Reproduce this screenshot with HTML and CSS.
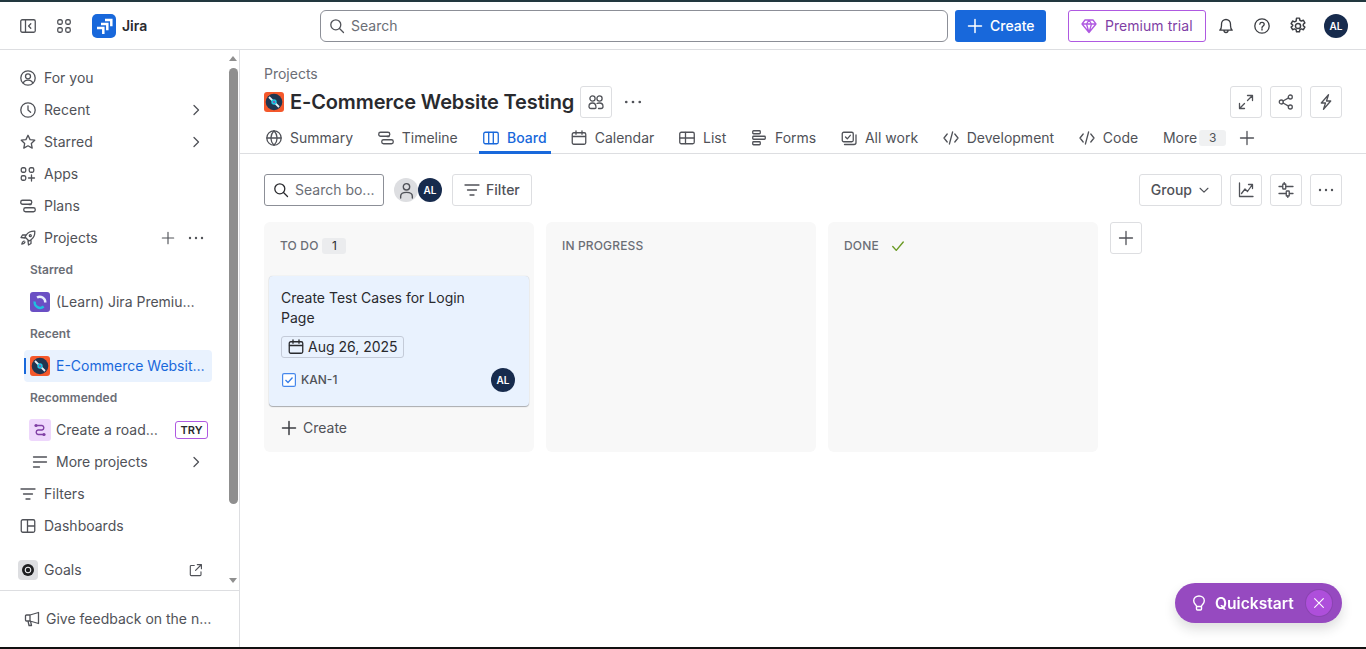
FILE: index.html
```html
<!DOCTYPE html>
<html>
<head>
	<meta charset="utf-8">
	<title>E-Commerce Website Testing - Board - Jira</title>
	<link rel="stylesheet" href="styles.css">
</head>
<body>
	<svg class="sprite" xmlns="http://www.w3.org/2000/svg">
		<defs>
			<symbol id="i-panel" viewBox="0 0 16 16"><rect x=".75" y="1.75" width="14.5" height="12.5" rx="1.5"/><path d="M5.5 2v12M10.8 5.8 8.6 8l2.2 2.2"/></symbol>
			<symbol id="i-grid" viewBox="0 0 16 16"><rect x="1.75" y="1.75" width="4.5" height="4.5" rx="1.5"/><rect x="9.75" y="1.75" width="4.5" height="4.5" rx="1.5"/><rect x="1.75" y="9.75" width="4.5" height="4.5" rx="1.5"/><rect x="9.75" y="9.75" width="4.5" height="4.5" rx="1.5"/></symbol>
			<symbol id="i-search" viewBox="0 0 16 16"><circle cx="6.8" cy="6.8" r="5"/><path d="m10.5 10.5 4 4"/></symbol>
			<symbol id="i-plus" viewBox="0 0 16 16"><path d="M8 1.5v13M1.5 8h13"/></symbol>
			<symbol id="i-gem" viewBox="0 0 16 16"><path d="M4 2h8l3 4-7 8.5L1 6zM1 6h14M5.5 6 8 14.5 10.500 6 8 2 5.500 6"/></symbol>
			<symbol id="i-bell" viewBox="0 0 16 16"><path d="M1.800 12.200c1.300-1.200 1.700-2.500 1.700-4.700V6a4.500 4.500 0 0 1 9 0v1.500c0 2.200.4 3.500 1.700 4.700zM6 12.500a2 2 0 0 0 4 0"/></symbol>
			<symbol id="i-help" viewBox="0 0 16 16"><circle cx="8" cy="8" r="7.200"/><path d="M5.800 6.200C5.900 5 6.800 4.300 8 4.300c1.300 0 2.200.8 2.200 1.900 0 1.700-2.200 1.700-2.200 3.500M8 11v1"/></symbol>
			<symbol id="i-gear" viewBox="0 0 16 16"><circle cx="8" cy="8" r="2.300"/><path d="M6.700 1h2.600l.4 1.900 1.300.7 1.800-.7 1.300 2.300-1.400 1.200v1.400l1.400 1.200-1.300 2.300-1.800-.7-1.300.7-.4 1.900H6.700l-.4-1.900-1.300-.7-1.800.7-1.300-2.300 1.400-1.200V7.100L1.900 5.900l1.300-2.300 1.800.7 1.300-.7z"/></symbol>
			<symbol id="i-person" viewBox="0 0 16 16"><circle cx="8" cy="8" r="7.200"/><circle cx="8" cy="6.300" r="2.500"/><path d="M3.300 13.200c.5-2.200 2.200-3.100 4.700-3.100s4.200.9 4.700 3.100"/></symbol>
			<symbol id="i-ghost" viewBox="0 0 16 16"><circle cx="8" cy="4.500" r="3"/><path d="M2.500 15v-1.500c0-2.500 2-3.700 5.500-3.700s5.500 1.200 5.500 3.700V15"/></symbol>
			<symbol id="i-clock" viewBox="0 0 16 16"><circle cx="8" cy="8" r="7.200"/><path d="M8 3.800V8l2.600 2.300"/></symbol>
			<symbol id="i-star" viewBox="0 0 16 16"><path d="m8 1.300 2.050 4.300 4.700.6-3.450 3.250.9 4.650L8 11.800l-4.200 2.300.9-4.650L1.250 6.200l4.700-.6z"/></symbol>
			<symbol id="i-chev" viewBox="0 0 16 16"><path d="m6 3.500 4.500 4.500L6 12.500"/></symbol>
			<symbol id="i-apps" viewBox="0 0 16 16"><rect x="1.250" y="1.750" width="4.500" height="4.500" rx="1.500"/><rect x="9.250" y="1.750" width="4.500" height="4.500" rx="1.500"/><rect x="1.250" y="9.750" width="4.500" height="4.500" rx="1.500"/><path d="M11.500 9v6M8.500 12h6"/></symbol>
			<symbol id="i-plans" viewBox="0 0 16 16"><rect x=".75" y="2.250" width="11" height="4" rx="1.800"/><rect x="3.750" y="9.750" width="11.500" height="4" rx="1.800"/><path d="M9 6.500h2"/></symbol>
			<symbol id="i-rocket" viewBox="0 0 16 16"><path d="M14.800 1.200c-3.800-.2-6.400.9-8.300 3.500L5 7l4 4 2.300-1.500c2.600-1.900 3.700-4.500 3.500-8.300zM6 5H2.500L1 7.500l4 .5M11 10v3.500L8.500 15 8 11M4 11c-1.300.4-2 1.500-2.200 3.200C3.500 14 4.600 13.300 5 12"/><circle cx="10.300" cy="5.700" r="1"/></symbol>
			<symbol id="i-dots" viewBox="0 0 16 16"><circle class="f" cx="2" cy="8" r="1.200"/><circle class="f" cx="8" cy="8" r="1.200"/><circle class="f" cx="14" cy="8" r="1.200"/></symbol>
			<symbol id="i-filter" viewBox="0 0 16 16"><path d="M1 3h14M3.500 8h9M6 13h4"/></symbol>
			<symbol id="i-lines" viewBox="0 0 16 16"><path d="M1.500 3h13M1.500 8h13M1.500 13h6"/></symbol>
			<symbol id="i-dash" viewBox="0 0 16 16"><rect x="1.250" y="1.750" width="13.500" height="12.500" rx="1.500"/><path d="M7.500 2v12M7.500 8h7"/></symbol>
			<symbol id="i-ext" viewBox="0 0 16 16"><path d="M6 2.800H2.500a1 1 0 0 0-1 1v9.700a1 1 0 0 0 1 1h10.200a1 1 0 0 0 1-1V10M9.500 1.800h4.700v4.700M14 2 7.500 8.500"/></symbol>
			<symbol id="i-horn" viewBox="0 0 16 16"><path d="M14.500 1.500v11L6 10H2.500a1 1 0 0 1-1-1V5a1 1 0 0 1 1-1H6zM6 4v6M4 10l1 4.500h2.500L6.500 10"/></symbol>
			<symbol id="i-people" viewBox="0 0 16 16"><circle cx="4.500" cy="4.500" r="2.600"/><circle cx="11.500" cy="4.500" r="2.600"/><path d="M1 12.500C1 10.500 2.500 9 4.500 9 7 9 8 11 8 13.500c0 .6-.400 1-1 1H3c-1.200 0-2-.8-2-2zM9 9.500c.7-.4 1.500-.5 2.500-.5 2.200 0 3.500 1.500 3.500 3.500 0 1.200-.8 2-2 2h-2.500"/></symbol>
			<symbol id="i-globe" viewBox="0 0 16 16"><circle cx="8" cy="8" r="7.200"/><path d="M1 8h14M8 .8c-4.200 4.400-4.200 10 0 14.400M8 .8c4.200 4.400 4.200 10 0 14.400"/></symbol>
			<symbol id="i-board" viewBox="0 0 16 16"><rect x=".75" y="2.250" width="14.500" height="11.500" rx="1.500"/><path d="M5.700 2.500v11M10.300 2.500v11"/></symbol>
			<symbol id="i-cal" viewBox="0 0 16 16"><rect x="1.250" y="2.750" width="13.500" height="11.500" rx="1.500"/><path d="M1.500 6.500h13M5 .8v3.500M11 .8v3.500"/></symbol>
			<symbol id="i-list" viewBox="0 0 16 16"><rect x=".75" y="2.250" width="14.500" height="11.500" rx="1.500"/><path d="M1 8h14M6.500 2.500v11"/></symbol>
			<symbol id="i-forms" viewBox="0 0 16 16"><rect x="1.750" y=".75" width="7.500" height="3" rx=".8"/><rect x="1.750" y="6.250" width="12.500" height="3" rx=".8"/><rect x="1.750" y="11.750" width="7.500" height="3" rx=".8"/></symbol>
			<symbol id="i-work" viewBox="0 0 16 16"><rect x="1.250" y="2.250" width="11" height="9.500" rx="1.500"/><path d="m4.500 7 1.800 1.800L9.300 5.300M15 5v7.500a2 2 0 0 1-2 2H3.500"/></symbol>
			<symbol id="i-code" viewBox="0 0 16 16"><path d="M4.200 4 1 8l3.200 4M11.800 4 15 8l-3.200 4M9.600 2 6.400 14"/></symbol>
			<symbol id="i-expand" viewBox="0 0 16 16"><path d="M9.500 1.500h5v5M14.200 1.800 9.500 6.500M6.500 14.500h-5v-5M1.800 14.200 6.500 9.500"/></symbol>
			<symbol id="i-share" viewBox="0 0 16 16"><circle cx="12.300" cy="3" r="2"/><circle cx="3.300" cy="8" r="2"/><circle cx="12.300" cy="13" r="2"/><path d="m5 7 5.600-3.100M5 9l5.600 3.100"/></symbol>
			<symbol id="i-bolt" viewBox="0 0 16 16"><path d="M10.500.8 3.300 9h4.200M5.500 15.200 12.700 7H8.500M10.500.8 8.500 7M5.500 15.200 7.500 9"/></symbol>
			<symbol id="i-down" viewBox="0 0 16 16"><path d="m3.500 6 4.500 4.500L12.500 6"/></symbol>
			<symbol id="i-chart" viewBox="0 0 16 16"><path d="M1.500 1v13.500H15M3.500 11.500 7 7l2.500 2.500 4.500-6.500M10.500 2.500H14.500V6.500"/></symbol>
			<symbol id="i-sliders" viewBox="0 0 16 16"><path d="M1 4.500h3.500M8 4.500h7M1 11.500h7M11.500 11.500H15M6.200 .5V2M9.800 14v1.500"/><rect x="4.750" y="2" width="3" height="5" rx=".6"/><rect x="8.250" y="9" width="3" height="5" rx=".6"/></symbol>
			<symbol id="i-check" viewBox="0 0 16 16"><path d="m2 8.500 4 4.500L14 3.500"/></symbol>
			<symbol id="i-bulb" viewBox="0 0 16 16"><path d="M5.500 11C4.800 9.700 2.700 8.600 2.700 5.800 2.700 3 5 1 8 1s5.300 2 5.300 4.800c0 2.800-2.100 3.900-2.800 5.200v3a1 1 0 0 1-1 1h-3a1 1 0 0 1-1-1zM5.500 11.500h5"/></symbol>
			<symbol id="i-close" viewBox="0 0 16 16"><path d="m3 3 10 10M13 3 3 13"/></symbol>
			<symbol id="p-learn" viewBox="0 0 20 20"><rect width="20" height="20" rx="3" fill="#6a4fc4"/><path d="M7 5.500a5.500 5.500 0 0 1 8.300 5" fill="none" stroke="#e8eefc" stroke-width="2.400"/><path d="M4.700 9.500a5.500 5.500 0 0 0 9 5" fill="none" stroke="#1fbfe0" stroke-width="2.400"/></symbol>
			<symbol id="p-shop" viewBox="0 0 20 20"><rect width="20" height="20" rx="3" fill="#f4582b"/><circle cx="10" cy="10" r="8.300" fill="#1f3550"/><path d="m5 5 10 10" stroke="#e6eef5" stroke-width="1.800"/><circle cx="10" cy="10" r="2.700" fill="#1fc3e0"/><circle cx="10" cy="10" r=".9" fill="#b0308f"/></symbol>
		</defs>
	</svg>

	<div class="topline"></div>

	<header class="topbar">
		<div class="topLeft">
			<svg class="icon btnIcon"><use href="#i-panel"/></svg>
			<svg class="icon btnIcon"><use href="#i-grid"/></svg>
			<div class="logo">
				<svg class="logoMark" viewBox="0 0 24 24">
					<rect width="24" height="24" rx="5" fill="#1868db"/>
					<path d="M13 6h6.300v6.300M9 10h6.300v6.300M5 14h6.300v6" fill="none" stroke="#fff" stroke-width="2.500"/>
				</svg>
				<span class="logoText">Jira</span>
			</div>
		</div>
		<div class="globalSearch">
			<svg class="icon"><use href="#i-search"/></svg>
			<span>Search</span>
		</div>
		<button class="createBtn"><svg class="icon"><use href="#i-plus"/></svg>Create</button>
		<button class="trialBtn"><svg class="icon"><use href="#i-gem"/></svg>Premium trial</button>
		<div class="topRight">
			<svg class="icon"><use href="#i-bell"/></svg>
			<svg class="icon"><use href="#i-help"/></svg>
			<svg class="icon gear"><use href="#i-gear"/></svg>
			<span class="avatar">AL</span>
		</div>
	</header>

	<div class="content">
		<aside class="sidebar">
			<div class="sideTop">
				<nav class="nav">
					<div class="navRow"><svg class="icon"><use href="#i-person"/></svg><span>For you</span></div>
					<div class="navRow"><svg class="icon"><use href="#i-clock"/></svg><span>Recent</span><svg class="icon end"><use href="#i-chev"/></svg></div>
					<div class="navRow"><svg class="icon"><use href="#i-star"/></svg><span>Starred</span><svg class="icon end"><use href="#i-chev"/></svg></div>
					<div class="navRow"><svg class="icon"><use href="#i-apps"/></svg><span>Apps</span></div>
					<div class="navRow"><svg class="icon"><use href="#i-plans"/></svg><span>Plans</span></div>
					<div class="navRow"><svg class="icon"><use href="#i-rocket"/></svg><span>Projects</span><svg class="icon end small"><use href="#i-plus"/></svg><svg class="icon"><use href="#i-dots"/></svg></div>
					<div class="navLabel">Starred</div>
					<div class="navRow sub">
						<svg class="projIcon"><use href="#p-learn"/></svg>
						<span>(Learn) Jira Premiu…</span>
					</div>
					<div class="navLabel">Recent</div>
					<div class="navRow sub active">
						<svg class="projIcon"><use href="#p-shop"/></svg>
						<span>E-Commerce Websit…</span>
					</div>
					<div class="navLabel">Recommended</div>
					<div class="navRow sub">
						<svg class="projIcon wide" viewBox="0 0 22 22"><rect width="22" height="22" rx="3" fill="#eed7fc"/><path d="M7 6.500h6a2.300 2.300 0 0 1 0 4.500H9a2.300 2.300 0 0 0 0 4.500h6" fill="none" stroke="#803fa5" stroke-width="1.400"/><circle cx="7" cy="6.500" r="1.600" fill="#803fa5"/><circle cx="15" cy="15.500" r="1.600" fill="#803fa5"/></svg>
						<span>Create a road…</span>
						<em class="tryTag">TRY</em>
					</div>
					<div class="navRow sub"><svg class="icon wideBox"><use href="#i-lines"/></svg><span>More projects</span><svg class="icon end"><use href="#i-chev"/></svg></div>
					<div class="navRow"><svg class="icon"><use href="#i-filter"/></svg><span>Filters</span></div>
					<div class="navRow"><svg class="icon"><use href="#i-dash"/></svg><span>Dashboards</span></div>
					<div class="navRow goals">
						<span class="goalIcon"><i></i></span>
						<span>Goals</span>
						<svg class="icon end extLink"><use href="#i-ext"/></svg>
					</div>
				</nav>
				<div class="scrollbar">
					<div class="arrowUp"></div>
					<div class="thumb"></div>
					<div class="arrowDown"></div>
				</div>
			</div>
			<div class="sideFoot">
				<svg class="icon"><use href="#i-horn"/></svg>
				<span>Give feedback on the n…</span>
			</div>
		</aside>

		<main class="main">
			<div class="crumb">Projects</div>
			<div class="titleRow">
				<svg class="projIcon"><use href="#p-shop"/></svg>
				<h1>E-Commerce Website Testing</h1>
				<button class="sqBtn"><svg class="icon"><use href="#i-people"/></svg></button>
				<svg class="icon titleDots"><use href="#i-dots"/></svg>
				<div class="rightBtns">
					<button class="sqBtn"><svg class="icon"><use href="#i-expand"/></svg></button>
					<button class="sqBtn"><svg class="icon"><use href="#i-share"/></svg></button>
					<button class="sqBtn"><svg class="icon"><use href="#i-bolt"/></svg></button>
				</div>
			</div>

			<div class="tabs">
				<div class="tab"><svg class="icon"><use href="#i-globe"/></svg>Summary</div>
				<div class="tab"><svg class="icon"><use href="#i-plans"/></svg>Timeline</div>
				<div class="tab current"><svg class="icon"><use href="#i-board"/></svg>Board</div>
				<div class="tab"><svg class="icon"><use href="#i-cal"/></svg>Calendar</div>
				<div class="tab"><svg class="icon"><use href="#i-list"/></svg>List</div>
				<div class="tab"><svg class="icon"><use href="#i-forms"/></svg>Forms</div>
				<div class="tab"><svg class="icon"><use href="#i-work"/></svg>All work</div>
				<div class="tab"><svg class="icon"><use href="#i-code"/></svg>Development</div>
				<div class="tab"><svg class="icon"><use href="#i-code"/></svg>Code</div>
				<div class="tab more">More<span class="moreCount">3</span></div>
				<svg class="icon tabPlus"><use href="#i-plus"/></svg>
			</div>

			<div class="toolbar">
				<div class="boardSearch"><svg class="icon"><use href="#i-search"/></svg><span>Search bo...</span></div>
				<div class="people">
					<span class="avatar ghost"><svg class="icon"><use href="#i-ghost"/></svg></span>
					<span class="avatar">AL</span>
				</div>
				<button class="textBtn"><svg class="icon"><use href="#i-filter"/></svg>Filter</button>
				<div class="rightBtns">
					<button class="textBtn group">Group<svg class="icon tiny"><use href="#i-down"/></svg></button>
					<button class="sqBtn"><svg class="icon"><use href="#i-chart"/></svg></button>
					<button class="sqBtn"><svg class="icon"><use href="#i-sliders"/></svg></button>
					<button class="sqBtn"><svg class="icon"><use href="#i-dots"/></svg></button>
				</div>
			</div>

			<div class="board">
				<section class="col">
					<div class="colHead">TO DO<span class="count">1</span></div>
					<article class="card">
						<div class="cardTitle">Create Test Cases for Login Page</div>
						<div class="datePill"><svg class="icon"><use href="#i-cal"/></svg>Aug 26, 2025</div>
						<div class="cardFoot">
							<svg class="taskIcon" viewBox="0 0 14 14"><rect x=".6" y=".6" width="12.800" height="12.800" rx="1.500" fill="#fff" stroke="#4688ec" stroke-width="1.200"/><path d="m3.500 7 2.500 2.500 4.500-5" fill="none" stroke="#357de8" stroke-width="1.300"/></svg>
							<span class="key">KAN-1</span>
							<span class="avatar">AL</span>
						</div>
					</article>
					<div class="colCreate"><svg class="icon"><use href="#i-plus"/></svg>Create</div>
				</section>
				<section class="col">
					<div class="colHead">IN PROGRESS</div>
				</section>
				<section class="col">
					<div class="colHead">DONE<svg class="icon doneTick"><use href="#i-check"/></svg></div>
				</section>
				<button class="sqBtn"><svg class="icon"><use href="#i-plus"/></svg></button>
			</div>
		</main>
	</div>

	<div class="bottomline"></div>

	<div class="quickstart">
		<svg class="icon"><use href="#i-bulb"/></svg>
		<span>Quickstart</span>
		<span class="qsClose"><svg class="icon"><use href="#i-close"/></svg></span>
	</div>
</body>
</html>
```

FILE: styles.css
```css
* {
	box-sizing: border-box;
}
html, body {
	height: 100%;
}
body {
	margin: 0;
	display: flex;
	flex-direction: column;
	overflow: hidden;
	background-color: white;
	color: #505258;
	font-family: Inter, "Noto Sans", sans-serif;
	font-size: 14px;
	line-height: 20px;
}
button {
	font-family: inherit;
	font-size: 14px;
	line-height: 20px;
	cursor: pointer;
}
.sprite {
	display: none;
}
.icon {
	flex: none;
	width: 16px;
	height: 16px;
	fill: none;
	stroke: #505258;
	stroke-width: 1.300;
	stroke-linecap: round;
	stroke-linejoin: round;
}
.f {
	fill: #505258;
	stroke: none;
}

.topline {
	flex: none;
	height: 2px;
	background-color: #22383f;
}
.bottomline {
	flex: none;
	height: 2px;
	background-color: #111;
}

/* top bar */
.topbar {
	flex: none;
	display: flex;
	align-items: center;
	height: 48px;
	padding-right: 18px;
	border-bottom: 1px solid #dddee1;
}
.topLeft {
	display: flex;
	align-items: center;
	width: 320px;
	padding-left: 20px;
}
.btnIcon {
	margin-right: 20px;
}
.logo {
	display: flex;
	align-items: center;
	gap: 6px;
}
.logoMark {
	width: 24px;
	height: 24px;
}
.logoText {
	font-size: 14px;
	font-weight: 600;
	color: #292a2e;
}
.globalSearch {
	display: flex;
	align-items: center;
	gap: 6px;
	width: 628px;
	height: 32px;
	padding-left: 8px;
	border: 1px solid #8c8f97;
	border-radius: 6px;
	color: #6b6e76;
}
.createBtn {
	display: flex;
	align-items: center;
	gap: 7px;
	height: 32px;
	width: 91px;
	margin-left: 7px;
	padding: 0 0 0 12px;
	border: 0;
	border-radius: 3px;
	background-color: #1868db;
	color: white;
	font-weight: 500;
}
.createBtn .icon {
	stroke: white;
	stroke-width: 1.500;
}
.trialBtn {
	display: flex;
	align-items: center;
	gap: 8px;
	height: 32px;
	width: 138px;
	margin-left: 22px;
	padding: 0 0 0 12px;
	border: 1px solid #af59e1;
	border-radius: 3px;
	background-color: white;
	color: #803fa5;
	font-weight: 400;
	letter-spacing: .05px;
}
.trialBtn .icon {
	stroke: #af59e1;
}
.topRight {
	display: flex;
	align-items: center;
	gap: 20px;
	margin-left: 12px;
}
.topRight .icon {
	stroke: #3b3d42;
}
.topRight .gear {
	width: 18px;
	height: 18px;
	margin: 0 -1px;
}
.topRight .avatar {
	margin-left: -2px;
}
.avatar {
	flex: none;
	display: flex;
	align-items: center;
	justify-content: center;
	width: 24px;
	height: 24px;
	border-radius: 50%;
	background-color: #172b4d;
	color: white;
	font-size: 10px;
	font-weight: 600;
}

.content {
	flex: 1;
	display: flex;
	min-height: 0;
}

/* sidebar */
.sidebar {
	flex: none;
	display: flex;
	flex-direction: column;
	width: 240px;
	border-right: 1px solid #dddee1;
}
.sideTop {
	display: flex;
	height: 541px;
	border-bottom: 1px solid #dddee1;
}
.nav {
	width: 224px;
	padding: 12px 12px 0;
}
.navRow {
	display: flex;
	align-items: center;
	gap: 8px;
	height: 32px;
	padding-left: 8px;
	padding-right: 8px;
	border-radius: 4px;
	white-space: nowrap;
}
.navRow .end {
	margin-left: auto;
}
.navRow .small {
	margin-right: 5px;
	width: 14px;
	height: 14px;
}
.navLabel {
	height: 32px;
	padding-left: 18px;
	font-size: 12px;
	font-weight: 600;
	line-height: 32px;
	color: #6b6e76;
}
.sub {
	margin-left: 12px;
	padding-left: 6px;
	gap: 6px;
}
.active {
	position: relative;
	background-color: #e9f2fe;
	color: #1868db;
}
.active::before {
	content: "";
	position: absolute;
	left: 0;
	top: 8px;
	width: 2px;
	height: 16px;
	background-color: #1868db;
}
.projIcon {
	flex: none;
	width: 20px;
	height: 20px;
}
.projIcon.wide {
	width: 22px;
	height: 22px;
	margin-left: -1px;
	margin-right: -1px;
}
.wideBox {
	margin: 0 2px;
}
.tryTag {
	margin-left: auto;
	margin-right: -4px;
	width: 33px;
	height: 18px;
	border: 1px solid #af59e1;
	border-radius: 3px;
	color: #292a2e;
	font-size: 11px;
	font-style: normal;
	font-weight: 600;
	line-height: 16px;
	text-align: center;
}
.goals {
	margin-top: 12px;
	padding-left: 6px;
	gap: 6px;
}
.extLink {
	width: 14px;
	height: 14px;
	margin-right: 1px;
}
.goalIcon {
	display: flex;
	align-items: center;
	justify-content: center;
	width: 20px;
	height: 20px;
	border-radius: 4px;
	background-color: #dddee1;
}
.goalIcon i {
	display: block;
	width: 12px;
	height: 12px;
	border-radius: 50%;
	background: radial-gradient(circle, #1e1f21 0 2px, #dddee1 2.300px 3.300px, #1e1f21 3.600px);
}
.scrollbar {
	display: flex;
	flex-direction: column;
	align-items: center;
	width: 15px;
	padding-left: 3px;
}
.arrowUp {
	margin-top: 6px;
	border: 4.500px solid transparent;
	border-top: 0;
	border-bottom: 5px solid #8f8f8f;
}
.thumb {
	width: 9px;
	height: 436px;
	margin-top: 7px;
	border-radius: 5px;
	background-color: #8f8f8f;
}
.arrowDown {
	margin-top: 74px;
	border: 4.500px solid transparent;
	border-bottom: 0;
	border-top: 5px solid #8f8f8f;
}
.sideFoot {
	flex: 1;
	display: flex;
	align-items: center;
	gap: 6px;
	padding-left: 24px;
}

/* page head */
.main {
	flex: 1;
	min-width: 0;
	padding-top: 14px;
}
.crumb {
	padding-left: 24px;
	color: #6b6e76;
}
.titleRow {
	display: flex;
	align-items: center;
	height: 32px;
	margin-top: 2px;
	padding: 0 24px;
}
h1 {
	margin: 0 6px;
	font-size: 20px;
	font-weight: 600;
	letter-spacing: -.12px;
	line-height: 24px;
	color: #292a2e;
}
.sqBtn {
	flex: none;
	display: flex;
	align-items: center;
	justify-content: center;
	width: 32px;
	height: 32px;
	padding: 0;
	border: 1px solid #dddee1;
	border-radius: 3px;
	background-color: white;
}
.titleDots {
	margin-left: 12px;
	width: 18px;
	height: 18px;
}
.rightBtns {
	display: flex;
	gap: 8px;
	margin-left: auto;
}

/* tabs */
.tabs {
	display: flex;
	align-items: center;
	height: 32px;
	margin-top: 4px;
	padding-left: 22px;
	border-bottom: 1px solid #dddee1;
}
.tab {
	display: flex;
	align-items: center;
	gap: 8px;
	height: 32px;
	margin-right: 16.700px;
	padding: 0 4px;
	white-space: nowrap;
}
.current {
	margin-left: .6px;
	margin-right: 16.100px;
	color: #1868db;
	font-weight: 500;
	box-shadow: inset 0 -3px 0 #1868db;
}
.current .icon {
	stroke: #1868db;
}
.more {
	gap: 2px;
	margin-right: 0;
}
.moreCount {
	width: 27px;
	height: 16px;
	border-radius: 3px;
	background-color: #f0f1f2;
	font-size: 12px;
	line-height: 16px;
	text-align: center;
}
.tabPlus {
	margin-left: 9px;
}

/* toolbar */
.toolbar {
	display: flex;
	align-items: center;
	height: 32px;
	margin-top: 20px;
	padding: 0 24px;
}
.boardSearch {
	display: flex;
	align-items: center;
	gap: 6px;
	width: 120px;
	height: 32px;
	padding-left: 8px;
	border: 1px solid #8c8f97;
	border-radius: 3px;
	color: #6b6e76;
	white-space: nowrap;
}
.boardSearch .icon {
	stroke: #292a2e;
}
.people {
	display: flex;
	margin-left: 10px;
}
.ghost {
	background-color: #dddee1;
}
.ghost .icon {
	width: 17px;
	height: 17px;
}
.textBtn {
	display: flex;
	align-items: center;
	gap: 6px;
	height: 32px;
	margin-left: 10px;
	padding: 0 11px;
	border: 1px solid #dddee1;
	border-radius: 3px;
	background-color: white;
	color: #505258;
	font-weight: 500;
}
.group {
	margin-left: 0;
	gap: 5px;
}
.tiny {
	width: 14px;
	height: 14px;
	margin-right: -1px;
}

/* board */
.board {
	display: flex;
	align-items: flex-start;
	gap: 12px;
	margin-top: 16px;
	padding-left: 24px;
}
.col {
	width: 270px;
	height: 230px;
	padding: 0 5px;
	border-radius: 6px;
	background-color: #f8f8f8;
}
.colHead {
	display: flex;
	align-items: center;
	height: 48px;
	padding-left: 11px;
	font-size: 12px;
	font-weight: 500;
	letter-spacing: .15px;
	color: #6b6e76;
}
.count {
	width: 24px;
	height: 16px;
	margin-left: 4px;
	border-radius: 3px;
	background-color: #ebecee;
	color: #292a2e;
	font-weight: 400;
	line-height: 16px;
	text-align: center;
}
.doneTick {
	margin-left: 12px;
	width: 14px;
	height: 14px;
	stroke: #6a9a23;
	stroke-width: 1.600;
}
.card {
	width: 260px;
	height: 130px;
	margin-top: 6px;
	padding: 12px 14px 0 12px;
	border-radius: 4px;
	background-color: #e9f2fe;
	box-shadow: 0 1px 1px #a9abaf, 0 0 1px #c4c6ca;
}
.cardTitle {
	width: 200px;
	color: #292a2e;
}
.datePill {
	display: flex;
	align-items: center;
	gap: 4px;
	width: 123px;
	height: 22px;
	margin-top: 8px;
	padding-left: 6px;
	border: 1px solid #c4cbd8;
	border-radius: 3px;
	color: #292a2e;
	white-space: nowrap;
}
.datePill .icon {
	stroke: #292a2e;
}
.cardFoot {
	display: flex;
	align-items: center;
	gap: 5px;
	margin-top: 10px;
}
.taskIcon {
	flex: none;
	width: 14px;
	height: 14px;
	margin-left: 1px;
}
.key {
	font-size: 12px;
	font-weight: 500;
}
.cardFoot .avatar {
	margin-left: auto;
}
.colCreate {
	display: flex;
	align-items: center;
	gap: 6px;
	height: 32px;
	margin-top: 6px;
	padding-left: 12px;
}
.colCreate .icon {
	stroke: #3b3d42;
	stroke-width: 1.500;
}

/* floating quickstart pill */
.quickstart {
	position: fixed;
	right: 24px;
	bottom: 26px;
	display: flex;
	align-items: center;
	gap: 8px;
	width: 167px;
	height: 40px;
	padding-left: 16px;
	border-radius: 20px;
	background-color: #964ac0;
	box-shadow: 0 6px 12px rgba(30, 31, 33, 0.15);
	color: white;
	font-size: 15.600px;
	font-weight: 600;
	line-height: 21px;
}
.quickstart > .icon {
	stroke: white;
	stroke-width: 1.400;
}
.qsClose {
	display: flex;
	align-items: center;
	justify-content: center;
	width: 26px;
	height: 26px;
	margin-left: auto;
	margin-right: 10px;
	border-radius: 50%;
	background-color: #ae4fdb;
	box-shadow: 0 0 0 1px #8a44b0;
}
.qsClose .icon {
	width: 14px;
	height: 14px;
	stroke: white;
}
```
